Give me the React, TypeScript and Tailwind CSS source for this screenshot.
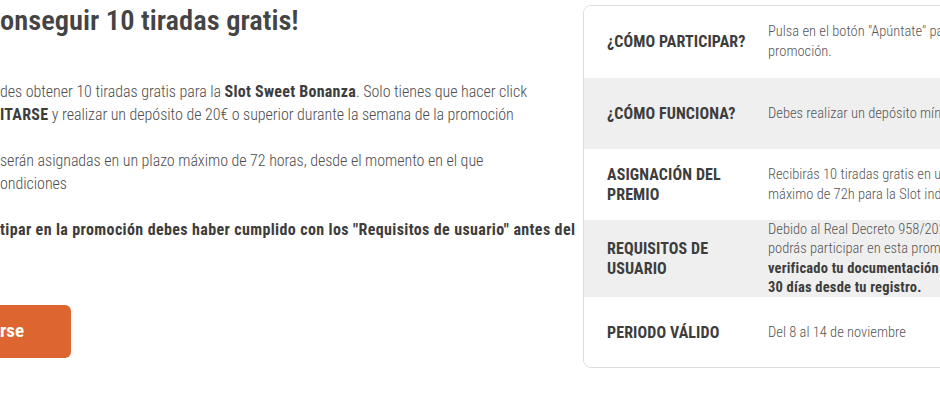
const rows = [
  {
    label: ['¿CÓMO PARTICIPAR?'],
    value: [<>Pulsa en el botón "Apúntate" para participar en la</>, <>promoción.</>],
    gray: false,
    h: 'h-[72px]',
  },
  {
    label: ['¿CÓMO FUNCIONA?'],
    value: [<>Debes realizar un depósito mínimo de 20€ durante la semana de la promoción.</>],
    gray: true,
    h: 'h-[71px]',
  },
  {
    label: ['ASIGNACIÓN DEL', 'PREMIO'],
    value: [<>Recibirás 10 tiradas gratis en un plazo</>, <>máximo de 72h para la Slot indicada.</>],
    gray: false,
    h: 'h-[71px]',
  },
  {
    label: ['REQUISITOS DE', 'USUARIO'],
    value: [
      <>Debido al Real Decreto 958/2020 de comunicaciones comerciales, solo</>,
      <>podrás participar en esta promoción si has</>,
      <b className="font-bold text-[#3d3d3d] tracking-[0.2px]">verificado tu documentación y han pasado</b>,
      <b className="font-bold text-[#3d3d3d] tracking-[0.2px]">30 días desde tu registro.</b>,
    ],
    gray: true,
    h: 'h-[77px]',
  },
  {
    label: ['PERIODO VÁLIDO'],
    value: [<>Del 8 al 14 de noviembre</>],
    gray: false,
    h: 'h-[71px]',
  },
];

export default function App() {
  return (
    <div className="w-[940px] h-[400px] overflow-hidden bg-white flex font-['Roboto_Condensed',Roboto,sans-serif]">
      <div className="w-[583px] shrink-0 text-[#4d4d4d]">
        <h2 className="mt-[4px] text-[28.5px] leading-[34px] font-semibold text-[#444] whitespace-nowrap">
          onseguir 10 tiradas gratis!
        </h2>
        <div className="mt-[43px] text-[16px] leading-[22.5px] font-light tracking-[-0.05px] whitespace-nowrap">
          <p>
            des obtener 10 tiradas gratis para la <b className="font-bold text-[#3d3d3d] tracking-[0.25px]">Slot Sweet Bonanza</b>. Solo tienes que hacer click
            <br />
            <b className="font-bold text-[#3d3d3d] tracking-[0.25px]">ITARSE</b> y realizar un depósito de 20€ o superior durante la semana de la promoción
          </p>
          <p className="mt-[24px]">
            serán asignadas en un plazo máximo de 72 horas, desde el momento en el que
            <br />
            ondiciones
          </p>
          <p className="mt-[24px] font-bold text-[#3d3d3d] tracking-[0.37px]">
            tipar en la promoción debes haber cumplido con los "Requisitos de usuario" antes del
          </p>
        </div>
        <button className="mt-[63px] h-[53px] w-[71px] rounded-r-[6px] bg-[#dd652f] text-white text-[19px] font-bold text-left">
          rse
        </button>
      </div>
      <div className="mt-[5px] w-[460px] h-[363px] shrink-0 border border-[#dcdcdc] rounded-[8px] overflow-hidden">
        {rows.map((r, i) => (
          <div key={i} className={`flex items-center ${r.h} ${r.gray ? 'bg-[#efefef]' : 'bg-white'}`}>
            <div className="w-[184px] shrink-0 pl-[23px] text-[16px] leading-[20px] font-bold tracking-[0.1px] text-[#3d3d3d]">
              {r.label.map((l) => (
                <div key={l}>{l}</div>
              ))}
            </div>
            <div className={`text-[14.5px] ${r.value.length > 2 ? 'leading-[19.5px]' : 'leading-[20px]'} font-light text-[#555] whitespace-nowrap`}>
              {r.value.map((v, j) => (
                <div key={j}>{v}</div>
              ))}
            </div>
          </div>
        ))}
      </div>
    </div>
  );
}
